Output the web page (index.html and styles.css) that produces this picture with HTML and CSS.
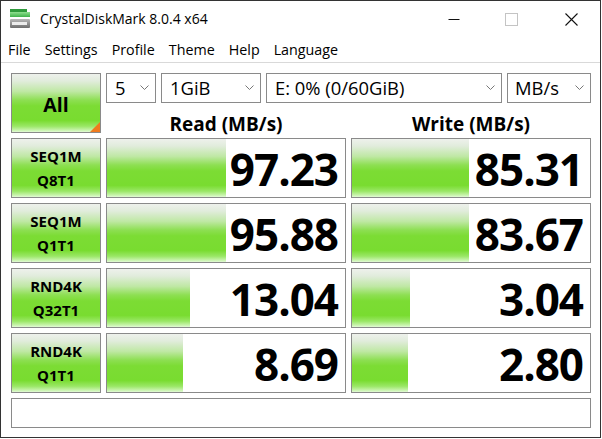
FILE: index.html
```html
<!DOCTYPE html>
<html>
<head>
<meta charset="utf-8">
<link rel="stylesheet" href="styles.css">
</head>
<body>
<div class="window">
  <div class="titlebar">
    <svg class="app-icon" width="22" height="19" viewBox="0 0 22 19">
      <defs>
        <linearGradient id="g1" x1="0" y1="0" x2="0" y2="1">
          <stop offset="0" stop-color="#8fe08f"/>
          <stop offset="1" stop-color="#3fb24a"/>
        </linearGradient>
        <linearGradient id="g2" x1="0" y1="0" x2="0" y2="1">
          <stop offset="0" stop-color="#b8b8b8"/>
          <stop offset="1" stop-color="#6e6e6e"/>
        </linearGradient>
      </defs>
      <rect x="1" y="0" width="17" height="3" fill="#2f9a3c"/>
      <rect x="1" y="3" width="20" height="5" fill="url(#g1)"/>
      <rect x="1" y="10" width="20" height="9" rx="1" fill="url(#g2)"/>
      <rect x="3" y="13" width="15" height="3" fill="#ececec"/>
    </svg>
    <span class="title">CrystalDiskMark 8.0.4 x64</span>
    <div class="caption">
      <span class="cap-btn"><svg width="12" height="12" viewBox="0 0 12 12"><line x1="0.5" y1="6.5" x2="11.5" y2="6.5" stroke="#111" stroke-width="1"/></svg></span>
      <span class="cap-btn"><svg width="13" height="13" viewBox="0 0 13 13"><rect x="0.5" y="0.5" width="12" height="12" fill="none" stroke="#c4c4c4" stroke-width="1"/></svg></span>
      <span class="cap-btn"><svg width="13" height="13" viewBox="0 0 13 13"><path d="M0.5 0.5 L12.5 12.5 M12.5 0.5 L0.5 12.5" stroke="#111" stroke-width="1.1" fill="none"/></svg></span>
    </div>
  </div>
  <div class="menubar">
    <span class="menu-item">File</span>
    <span class="menu-item">Settings</span>
    <span class="menu-item">Profile</span>
    <span class="menu-item">Theme</span>
    <span class="menu-item">Help</span>
    <span class="menu-item">Language</span>
  </div>
  <div class="content">
    <div class="grid">
      <div class="btn all">All<span class="corner"></span></div>
      <div class="combos">
        <div class="combo c-count"><span>5</span><svg class="chev" width="9" height="5" viewBox="0 0 9 5"><polyline points="0.5,0.5 4.5,4.5 8.5,0.5" fill="none" stroke="#777" stroke-width="1"/></svg></div>
        <div class="combo c-size"><span>1GiB</span><svg class="chev" width="9" height="5" viewBox="0 0 9 5"><polyline points="0.5,0.5 4.5,4.5 8.5,0.5" fill="none" stroke="#777" stroke-width="1"/></svg></div>
        <div class="combo c-drive"><span>E: 0% (0/60GiB)</span><svg class="chev" width="9" height="5" viewBox="0 0 9 5"><polyline points="0.5,0.5 4.5,4.5 8.5,0.5" fill="none" stroke="#777" stroke-width="1"/></svg></div>
        <div class="combo c-unit"><span>MB/s</span><svg class="chev" width="9" height="5" viewBox="0 0 9 5"><polyline points="0.5,0.5 4.5,4.5 8.5,0.5" fill="none" stroke="#777" stroke-width="1"/></svg></div>
      </div>
      <div class="col-head">Read (MB/s)</div>
      <div class="col-head">Write (MB/s)</div>

      <div class="btn label"><span>SEQ1M</span><span>Q8T1</span></div>
      <div class="cell" style="--bar:119px">97.23</div>
      <div class="cell" style="--bar:117px">85.31</div>

      <div class="btn label"><span>SEQ1M</span><span>Q1T1</span></div>
      <div class="cell" style="--bar:119px">95.88</div>
      <div class="cell" style="--bar:117px">83.67</div>

      <div class="btn label"><span>RND4K</span><span>Q32T1</span></div>
      <div class="cell" style="--bar:83px">13.04</div>
      <div class="cell" style="--bar:58px">3.04</div>

      <div class="btn label"><span>RND4K</span><span>Q1T1</span></div>
      <div class="cell" style="--bar:76px">8.69</div>
      <div class="cell" style="--bar:56px">2.80</div>

      <div class="comment"></div>
    </div>
  </div>
</div>
</body>
</html>
```
FILE: styles.css
```css
* { box-sizing: border-box; }
html, body { margin: 0; padding: 0; background: #fff; }
body { font-family: "Open Sans", "Noto Sans", sans-serif; color: #000; }

.window {
  width: 601px;
  height: 438px;
  border: 1px solid #333;
  background: #fff;
  overflow: hidden;
}

.titlebar {
  height: 36px;
  display: flex;
  align-items: center;
  padding-left: 8px;
}
.app-icon { display: block; margin-top: -2px; }
.title {
  margin-left: 9px;
  font-size: 14px;
  color: #000;
  flex: 1;
  padding-bottom: 1px;
}
.caption { display: flex; height: 36px; }
.cap-btn {
  width: 58px;
  display: flex;
  align-items: center;
  justify-content: center;
}
.cap-btn svg { display: block; }
.cap-btn:first-child svg { margin-right: 2px; }
.cap-btn:nth-child(2) svg { margin-left: -4px; }

.menubar {
  height: 26px;
  border-bottom: 1px solid #d9d9d9;
  display: flex;
  align-items: center;
  font-size: 14.3px;
  line-height: 25px;
}
.menu-item { padding: 0 7px; }

.content { padding: 10px 0 0 10px; }

.grid {
  display: grid;
  grid-template-columns: 90px 240px 240px;
  grid-template-rows: 30px 25px 60px 60px 60px 60px 30px;
  column-gap: 5px;
  row-gap: 5px;
}

.btn {
  border: 1px solid #8a8a8a;
  background: linear-gradient(to bottom,
    #eef1ec 0%, #e1ecdc 12%, #bfe8a4 30%, #8ddf52 45%,
    #7cdc34 55%, #79dc30 80%, #9ae766 90%, #c9f4ae 97%, #e2fad6 100%);
}
.all {
  grid-row: 1 / span 2;
  position: relative;
  display: flex;
  align-items: center;
  justify-content: center;
  font-weight: 700;
  font-size: 19.5px;
  padding-top: 2px;
}
.corner {
  position: absolute;
  right: 0;
  bottom: 0;
  width: 0;
  height: 0;
  border-style: solid;
  border-width: 0 0 10px 10px;
  border-color: transparent transparent #f07a1e transparent;
}

.combos {
  grid-column: 2 / span 2;
  display: flex;
  gap: 5px;
}
.combo {
  border: 1px solid #8a8a8a;
  background: #fff;
  display: flex;
  align-items: center;
  justify-content: space-between;
  padding: 0 6px 0 8px;
  font-size: 18.4px;
  height: 30px;
}
.combo span { line-height: 28px; }
.chev { display: block; margin-top: -2px; }
.c-count { width: 50px; }
.c-size { width: 100px; }
.c-drive { width: 236px; }
.c-unit { width: 84px; padding-left: 7px; }

.col-head {
  text-align: center;
  font-weight: 700;
  font-size: 19px;
  line-height: 25px;
  padding-top: 4px;
}

.label {
  display: flex;
  flex-direction: column;
  align-items: center;
  justify-content: center;
  font-weight: 700;
  font-size: 15px;
  line-height: 24px;
}

.cell {
  border: 1px solid #8a8a8a;
  background-color: #fff;
  background-image: linear-gradient(to bottom,
    #eef1ec 0%, #e1ecdc 12%, #bfe8a4 30%, #8ddf52 45%,
    #7cdc34 55%, #79dc30 80%, #9ae766 90%, #c9f4ae 97%, #e2fad6 100%);
  background-repeat: no-repeat;
  background-size: var(--bar) 100%;
  display: flex;
  align-items: center;
  justify-content: flex-end;
  padding-right: 7px;
  font-weight: 700;
  font-size: 44px;
  letter-spacing: -1px;
  line-height: 1;
  padding-top: 2px;
}

.comment {
  grid-column: 1 / -1;
  border: 1px solid #8a8a8a;
  background: #fff;
}
```
